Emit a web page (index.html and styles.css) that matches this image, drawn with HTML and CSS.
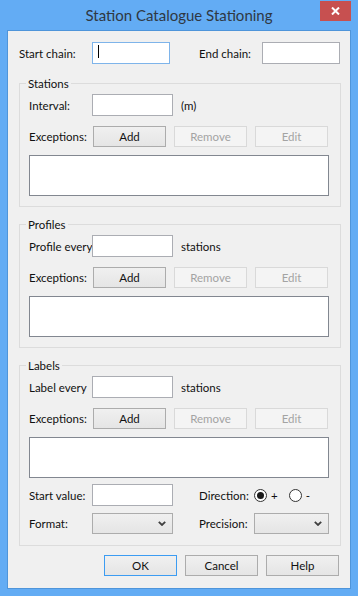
FILE: index.html
```html
<!DOCTYPE html>
<html>
<head>
<meta charset="utf-8">
<title>Station Catalogue Stationing</title>
<link rel="stylesheet" href="styles.css">
</head>
<body>
<div class="window">
  <div class="titlebar">
    <div class="title">Station Catalogue Stationing</div>
    <div class="close">
      <svg width="9" height="8" viewBox="0 0 9 8"><path d="M1 0.5 L8 7.5 M8 0.5 L1 7.5" stroke="#fff" stroke-width="2" fill="none"/></svg>
    </div>
  </div>
  <div class="client">
    <div class="row toprow">
      <span class="lbl lbl-start">Start chain:</span>
      <div class="edit edit-chain focused"><span class="caret"></span></div>
      <span class="lbl lbl-end">End chain:</span>
      <div class="edit edit-chain"></div>
    </div>

    <div class="group first">
      <div class="legend">Stations</div>
      <div class="row">
        <span class="lbl lbl-field">Interval:</span>
        <div class="edit edit-field"></div>
        <span class="unit">(m)</span>
      </div>
      <div class="row btnrow">
        <span class="lbl lbl-exc">Exceptions:</span>
        <button class="btn">Add</button>
        <button class="btn disabled">Remove</button>
        <button class="btn disabled">Edit</button>
      </div>
      <div class="listbox"></div>
    </div>

    <div class="group">
      <div class="legend">Profiles</div>
      <div class="row">
        <span class="lbl lbl-field">Profile every</span>
        <div class="edit edit-field"></div>
        <span class="unit">stations</span>
      </div>
      <div class="row btnrow">
        <span class="lbl lbl-exc">Exceptions:</span>
        <button class="btn">Add</button>
        <button class="btn disabled">Remove</button>
        <button class="btn disabled">Edit</button>
      </div>
      <div class="listbox"></div>
    </div>

    <div class="group labels">
      <div class="legend">Labels</div>
      <div class="row">
        <span class="lbl lbl-field">Label every</span>
        <div class="edit edit-field"></div>
        <span class="unit">stations</span>
      </div>
      <div class="row btnrow">
        <span class="lbl lbl-exc">Exceptions:</span>
        <button class="btn">Add</button>
        <button class="btn disabled">Remove</button>
        <button class="btn disabled">Edit</button>
      </div>
      <div class="listbox"></div>
      <div class="row startrow">
        <span class="lbl lbl-field">Start value:</span>
        <div class="edit edit-field"></div>
        <span class="lbl lbl-right">Direction:</span>
        <span class="radio checked"><span class="dot"></span></span>
        <span class="radio-text">+</span>
        <span class="radio second"></span>
        <span class="radio-text">-</span>
      </div>
      <div class="row formatrow">
        <span class="lbl lbl-field">Format:</span>
        <div class="combo combo-format">
          <svg width="8" height="5" viewBox="0 0 8 5"><path d="M0.8 0.8 L4 4 L7.2 0.8" stroke="#404040" stroke-width="1.8" fill="none"/></svg>
        </div>
        <span class="lbl lbl-right">Precision:</span>
        <div class="combo combo-precision">
          <svg width="8" height="5" viewBox="0 0 8 5"><path d="M0.8 0.8 L4 4 L7.2 0.8" stroke="#404040" stroke-width="1.8" fill="none"/></svg>
        </div>
      </div>
    </div>

    <div class="footer">
      <button class="btn default">OK</button>
      <button class="btn">Cancel</button>
      <button class="btn">Help</button>
    </div>
  </div>
</div>
</body>
</html>
```

FILE: styles.css
```css
* { box-sizing: border-box; }
html, body { margin: 0; padding: 0; }
body {
  width: 358px;
  height: 596px;
  overflow: hidden;
  font-family: Lato, "Noto Sans", sans-serif;
  font-size: 11.5px;
  color: #111;
}
.window {
  width: 358px;
  height: 596px;
  background: #63acf4;
  padding: 0 7px 7px;
  display: flex;
  flex-direction: column;
}
.titlebar {
  height: 30px;
  margin: 0 -7px;
  position: relative;
  display: flex;
  align-items: center;
  justify-content: center;
}
.title {
  font-size: 15px;
  color: #2f3843;
  padding-bottom: 1px;
}
.close {
  position: absolute;
  top: 1px;
  right: 7px;
  width: 31px;
  height: 20px;
  background: #c75050;
  display: flex;
  align-items: center;
  justify-content: center;
}
.client {
  flex: 1;
  background: #f0f0f0;
  border: 1px solid #4f95da;
  padding: 11px 0 0 11px;
}
.row {
  display: flex;
  align-items: center;
}
.lbl { white-space: nowrap; flex: none; }
.toprow { height: 22px; }
.lbl-start { width: 73px; }
.lbl-end { width: 63px; margin-left: 29px; }
.edit {
  flex: none;
  height: 22px;
  background: #fff;
  border: 1px solid #abadb3;
  position: relative;
}
.edit.focused { border-color: #7eb4ea; }
.edit-chain { width: 78px; }
.edit-field { width: 81px; }
.caret {
  display: block;
  width: 1px;
  height: 13px;
  background: #000;
  margin: 2px 0 0 5px;
}
.group {
  width: 322px;
  margin-top: 17px;
  border: 1px solid #dcdcdc;
  position: relative;
  padding: 10px 0 10px 9px;
}
.group.first { margin-top: 19px; }
.group.labels { padding-bottom: 11px; }
.legend {
  position: absolute;
  top: -8px;
  left: 6px;
  padding: 0 2px;
  line-height: 15px;
  background: #f0f0f0;
}
.lbl-field { width: 63px; }
.unit { margin-left: 8px; }
.btnrow { margin-top: 10px; }
.lbl-exc { width: 64px; }
.btn {
  flex: none;
  width: 73px;
  height: 21px;
  margin: 0 8px 0 0;
  padding: 0;
  border: 1px solid #acacac;
  background: linear-gradient(#f0f0f0, #e5e5e5);
  font: inherit;
  color: #111;
}
.btn.disabled {
  border-color: #d9d9d9;
  background: #f4f4f4;
  color: #a3a3a3;
}
.btn.default { border-color: #3c9cf2; }
.listbox {
  margin-top: 8px;
  width: 300px;
  height: 41px;
  background: #fff;
  border: 1px solid #828790;
}
.startrow { margin-top: 6px; }
.formatrow { margin-top: 7px; }
.lbl-right { width: 55px; margin-left: 26px; }
.radio {
  flex: none;
  width: 13px;
  height: 13px;
  border-radius: 50%;
  border: 1px solid #333;
  background: #fff;
  display: flex;
  align-items: center;
  justify-content: center;
}
.radio .dot {
  width: 7px;
  height: 7px;
  border-radius: 50%;
  background: #1a1a1a;
}
.radio.second { margin-left: 11px; }
.radio-text { margin-left: 4px; }
.combo {
  flex: none;
  height: 21px;
  border: 1px solid #acacac;
  background: linear-gradient(#f0f0f0, #e5e5e5);
  display: flex;
  align-items: center;
  justify-content: flex-end;
  padding-right: 6px;
}
.combo-format { width: 81px; }
.combo-precision { width: 75px; }
.footer {
  width: 322px;
  margin-top: 9px;
  display: flex;
  justify-content: flex-end;
  padding-right: 2px;
}
.footer .btn { margin: 0 0 0 8px; }
```
